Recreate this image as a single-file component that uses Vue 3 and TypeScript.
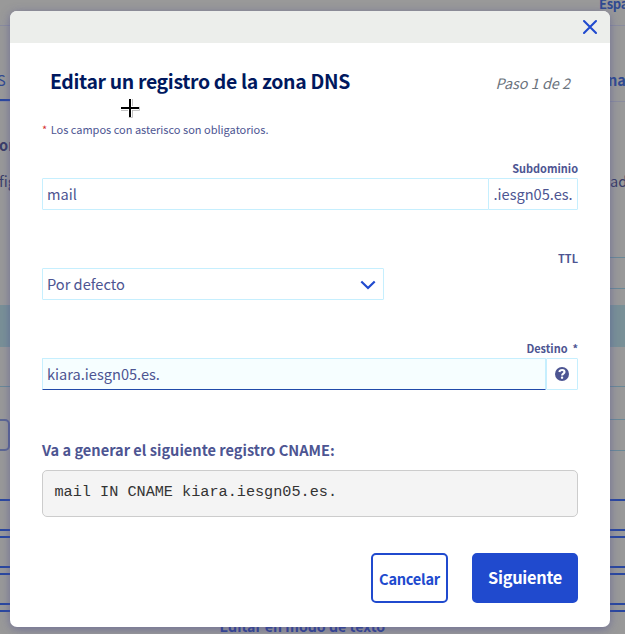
<script setup lang="ts">
import { ref, computed } from 'vue'

const subdomain = ref('mail')
const target = ref('kiara.iesgn05.es.')
const record = computed(() => `${subdomain.value} IN CNAME ${target.value}`)
const actions = ['add', 'modify', 'reset', 'edit']
</script>

<template>
  <div class="screen">
    <div class="page" aria-hidden="true">
      <div class="topbar"><span>Espa</span></div>
      <div class="tabs"><span class="tab active">S</span><span class="tab-next">na</span></div>
      <div class="heading">or</div>
      <div class="copy"><span>fig</span><span>ad</span></div>
      <div class="table">
        <i class="row r1"></i><i class="row r2"></i><i class="gap"></i><i class="row band"></i>
        <i class="row r3"></i><i class="row r4"></i><i class="row r5"></i>
        <b class="pager"></b>
      </div>
      <div class="actions"><div v-for="a in actions" :key="a" class="action"></div></div>
      <div class="text-mode">Editar en modo de texto</div>
    </div>

    <div class="dialog" role="dialog">
      <header class="bar">
        <svg class="close" viewBox="0 0 16 16"><path d="M2 2L14 14M14 2L2 14" /></svg>
      </header>
      <div class="body">
        <div class="title-row">
          <h1>Editar un registro de la zona DNS</h1>
          <span class="step">Paso 1 de 2</span>
        </div>
        <p class="note"><span class="star">*</span><span>Los campos con asterisco son obligatorios.</span></p>

        <label class="label">Subdominio</label>
        <div class="group">
          <div class="field grow">{{ subdomain }}</div>
          <div class="field suffix">.iesgn05.es.</div>
        </div>

        <label class="label">TTL</label>
        <div class="group select">
          <div class="field grow">Por defecto</div>
          <svg class="chevron" viewBox="0 0 16 10"><path d="M1.3 1.5L8 8L14.7 1.5" /></svg>
        </div>

        <label class="label">Destino&nbsp; *</label>
        <div class="group">
          <div class="field grow focused">{{ target }}</div>
          <div class="field help">
            <svg viewBox="0 0 14 14"><circle cx="7" cy="7" r="7" /><path d="M4.3 5.1C4.7 3.6 5.8 3 7.1 3C8.6 3 9.5 3.9 9.5 5C9.5 6.7 7.1 6.6 7.1 8.6" /><rect x="5.9" y="9.6" width="2.3" height="2.2" rx=".9" /></svg>
          </div>
        </div>

        <h2>Va a generar el siguiente registro CNAME:</h2>
        <pre>{{ record }}</pre>

        <footer>
          <button class="cancel">Cancelar</button>
          <button class="next">Siguiente</button>
        </footer>
      </div>
    </div>

    <svg class="cursor" viewBox="0 0 22 22">
      <path class="shade" d="M11.8 2V20.8M2 11.8H20.8" />
      <path class="halo" d="M11 1V20M1 11H20" />
      <path class="ink" d="M11 2V20M2 11H20" />
    </svg>
  </div>
</template>

<style>
body { margin: 0; overflow: hidden; }
</style>
<style scoped>
* { box-sizing: border-box; }
.screen { position: relative; width: 625px; height: 634px; overflow: hidden; background: #999; font-family: "Noto Sans CJK SC", "Noto Sans", sans-serif; color: #4d5592; }
.page { width: 625px; height: 634px; }
.topbar { height: 26px; border-bottom: 1px solid #8a8c9e; display: flex; justify-content: flex-end; font-size: 13px; line-height: 7px; font-weight: 700; letter-spacing: -.3px; color: #304a91; }
.topbar span { width: 26px; white-space: nowrap; }
.tabs { height: 76px; display: flex; justify-content: space-between; border-bottom: 1px solid #8a8c9e; line-height: 107px; font-size: 14.6px; font-weight: 700; color: #304a91; }
.tab { width: 12px; height: 75px; border-bottom: 2px solid #2947a0; font-weight: 400; text-indent: -3px; }
.tab-next { width: 17px; }
.heading { height: 60px; padding-top: 32px; line-height: 22px; font-size: 14.6px; font-weight: 700; color: #393d68; text-indent: -1px; }
.copy { height: 76px; display: flex; justify-content: space-between; line-height: 37px; font-size: 14.6px; color: #393d68; text-indent: -1px; }
.copy span:last-child { width: 15px; text-indent: 0; }
.table { position: relative; height: 247px; padding-top: 19px; display: flex; flex-direction: column; }
.row { display: block; flex: none; border-bottom: 1px solid #698998; }
.r1 { height: 1px; margin-left: 600px; }
.r2 { height: 31px; margin-left: 600px; }
.gap { height: 16px; flex: none; }
.band { height: 42px; background: #799097; border: 0; }
.r3 { height: 40px; }
.r4 { height: 33px; margin-left: 600px; }
.r5 { height: 31px; margin-left: 600px; }
.pager { position: absolute; left: -20px; top: 181px; width: 30px; height: 32px; border: 2px solid #5c6794; border-radius: 5px; }
.actions { display: flex; flex-direction: column; gap: 5px; margin-top: 14px; }
.action { height: 32px; border: solid #2947a0; border-width: 2px 0; }
.text-mode { position: absolute; left: 219.5px; top: 616px; line-height: 20px; font-size: 14.15px; font-weight: 700; color: #304394; white-space: nowrap; }
.dialog { position: absolute; left: 10px; top: 11px; width: 600px; height: 616px; border-radius: 7px; background: #fff; overflow: hidden; box-shadow: 0 2px 10px rgba(77, 76, 145, .55); }
.bar { height: 32px; background: #eceeeb; display: flex; justify-content: flex-end; padding: 8px 12px 0 0; }
.close { width: 16px; height: 16px; fill: none; stroke: #204ace; stroke-width: 2.1; stroke-linecap: round; }
.body { padding: 24px 32px 0; }
.title-row { height: 32px; display: flex; justify-content: space-between; padding: 0 8px; white-space: nowrap; }
h1 { margin: 0; font-size: 19.4px; line-height: 27px; font-weight: 700; letter-spacing: -.33px; color: #00185e; }
.step { font-size: 14.4px; line-height: 31px; font-style: italic; color: #6b737d; }
.note { display: flex; gap: 3.5px; margin: 21px 0 21px; height: 18px; line-height: 18px; font-size: 11px; white-space: nowrap; }
.star { color: #d63232; }
.label { display: block; height: 19px; line-height: 19px; text-align: right; font-size: 10.95px; font-weight: 700; }
.group { display: flex; height: 32px; margin-bottom: 39px; position: relative; }
.field { border: 1px solid #c6effe; border-radius: 1px; padding: 0 4px; line-height: 29px; font-size: 14.6px; white-space: nowrap; }
.grow { flex: 1; }
.suffix { width: 90px; margin-left: -1px; padding-left: 4.5px; }
.select { width: 342px; }
.chevron { position: absolute; right: 8px; top: 12px; width: 16px; height: 10px; fill: none; stroke: #204ace; stroke-width: 2.2; }
.focused { background: #f6feff; border-bottom-color: #204aa9; }
.help { width: 32px; padding: 8px 0 0 8px; }
.help svg { width: 14px; height: 14px; display: block; fill: #4d5592; }
.help path { fill: none; stroke: #fff; stroke-width: 2.1; }
.help rect { fill: #fff; }
h2 { margin: 49px 0 9px; height: 22px; font-size: 14.6px; line-height: 22px; font-weight: 700; white-space: nowrap; }
pre { margin: 0; height: 47px; border: 1px solid #ccc; border-radius: 5px; background: #f4f4f4; padding: 11px 11.5px; color: #333; font: 15.2px/21px "Liberation Mono", monospace; }
footer { display: flex; justify-content: flex-end; gap: 24px; margin-top: 36px; }
button { height: 50px; border: 2px solid #204ace; border-radius: 5px; font-family: inherit; font-weight: 700; padding: 0 0 2px; white-space: nowrap; }
.cancel { width: 77px; background: #fff; color: #204ace; font-size: 14.6px; letter-spacing: -.25px; padding-bottom: 0; }
.next { width: 106px; background: #204ace; color: #fff; font-size: 16.4px; letter-spacing: -.3px; }
.cursor { position: absolute; left: 119px; top: 97px; width: 22px; height: 22px; fill: none; }
.shade { stroke: rgba(0, 0, 0, .3); stroke-width: 4; }
.halo { stroke: #fff; stroke-width: 4; }
.ink { stroke: #000; stroke-width: 2; }
</style>
